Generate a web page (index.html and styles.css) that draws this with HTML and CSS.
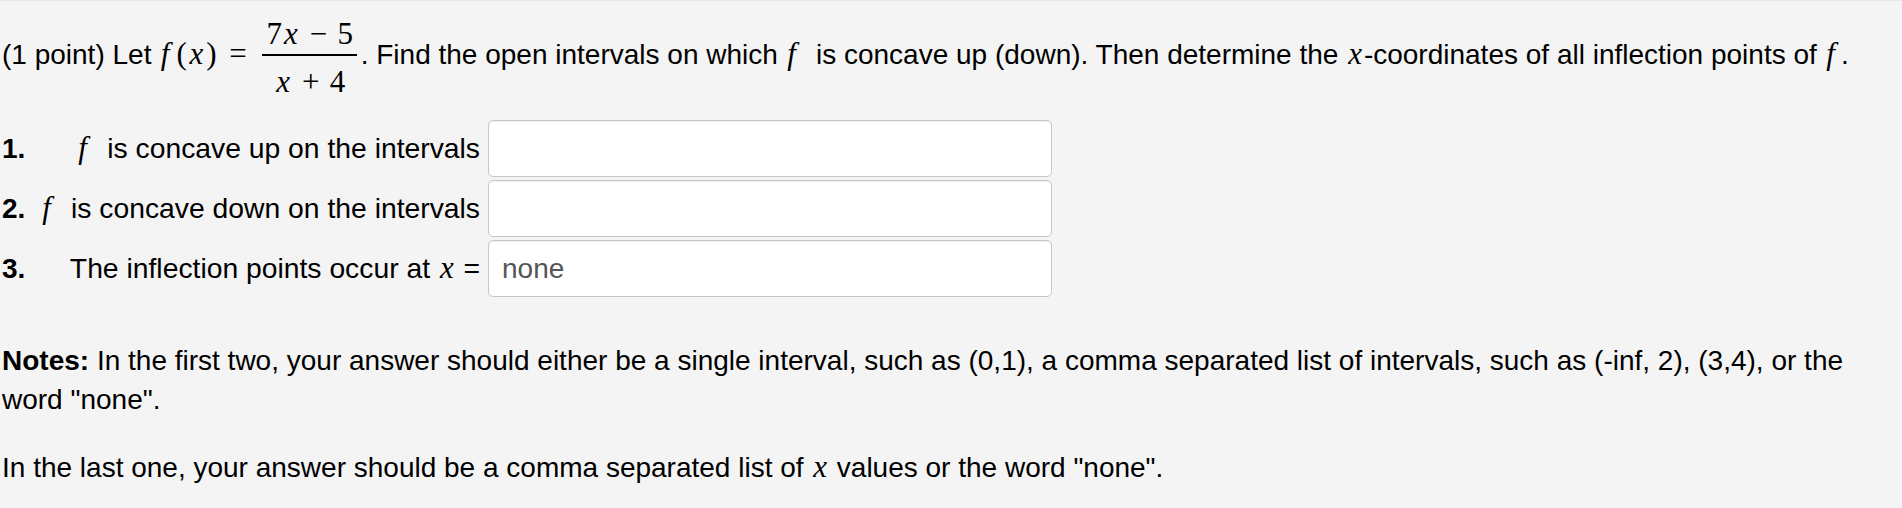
FILE: index.html
```html
<!DOCTYPE html>
<html>
<head>
<meta charset="utf-8">
<link rel="stylesheet" href="styles.css">
</head>
<body>
<div class="problem">
  <p class="intro">(1 point) Let <span class="m"><i class="f">f</i><span class="p">(</span><i class="x">x</i><span class="p">)</span><span class="rel">=</span><span class="frac"><span class="num">7<i class="x">x</i><span class="bin">−</span>5</span><span class="den"><i class="x">x</i><span class="bin">+</span>4</span></span></span>. Find the open intervals on which <span class="m"><i class="f fs">f</i></span> is concave up (down). Then determine the <span class="m"><i class="x">x</i></span>-coordinates of all inflection points of <span class="m"><i class="f">f</i></span>.</p>

  <div class="answers">
    <span class="n">1.</span>
    <span class="lbl"><span class="m"><i class="f fs">f</i></span> is concave up on the intervals</span>
    <input class="ans" type="text" value="">

    <span class="n">2.</span>
    <span class="lbl"><span class="m"><i class="f fs">f</i></span> is concave down on the intervals</span>
    <input class="ans" type="text" value="">

    <span class="n">3.</span>
    <span class="lbl">The inflection points occur at <span class="m"><i class="x">x</i></span> =</span>
    <input class="ans" type="text" value="none">
  </div>

  <p class="notes"><b>Notes:</b> In the first two, your answer should either be a single interval, such as (0,1), a comma separated list of intervals, such as (-inf, 2), (3,4), or the word "none".</p>
  <p class="notes2">In the last one, your answer should be a comma separated list of <span class="m"><i class="x">x</i></span> values or the word "none".</p>
</div>
</body>
</html>
```

FILE: styles.css
```css
* { box-sizing: border-box; }

html, body {
  background: #f4f4f4;
}

body {
  margin: 0;
  border-top: 1px solid #e6e6e6;
  font-family: "Liberation Sans", Arial, Helvetica, sans-serif;
  font-size: 28px;
  line-height: 39px;
  color: #000;
}

.problem {
  padding: 0 2px;
}

/* inline math */
.m {
  font-family: "Liberation Serif", "Times New Roman", serif;
  font-size: 31px;
  line-height: 1;
}

.m i {
  font-style: italic;
}

.m .f {
  padding: 0 0.2em 0 0.05em;
}

.m .fs {
  padding-right: 0.4em;
}

.m .x {
  padding: 0 0.064em;
}

.m .p {
  padding: 0 0.028em;
}

.m .rel {
  padding: 0 0.385em;
}

.m .bin {
  padding: 0 0.329em;
}

.intro {
  margin: 0;
  padding-top: 17px;
}

.frac {
  display: inline-flex;
  flex-direction: column;
  align-items: stretch;
  vertical-align: 20px;
  margin: 0 0.12em;
}

.num {
  text-align: center;
  padding: 0 4px 5px;
  border-bottom: 2px solid #000;
}

.den {
  text-align: center;
  padding: 9.5px 4px 0;
}

.answers {
  display: grid;
  grid-template-columns: 28px 458px 564px;
  row-gap: 3px;
  align-items: center;
  margin-top: 23.5px;
}

.n {
  font-weight: bold;
  white-space: nowrap;
}

.lbl {
  text-align: right;
  padding-right: 8px;
  font-size: 28.3px;
  white-space: nowrap;
}

.ans {
  width: 564px;
  height: 57px;
  margin: 0;
  border: 1px solid #c6c6c6;
  border-radius: 5px;
  background: #fff;
  padding: 0 13px;
  font-family: "Liberation Sans", Arial, sans-serif;
  font-size: 28px;
  color: #555;
  box-shadow: inset 0 1px 1px rgba(0,0,0,0.06);
}

.notes {
  margin: 43.5px 0 0;
}

.notes2 {
  margin: 29px 0 0;
}
```
